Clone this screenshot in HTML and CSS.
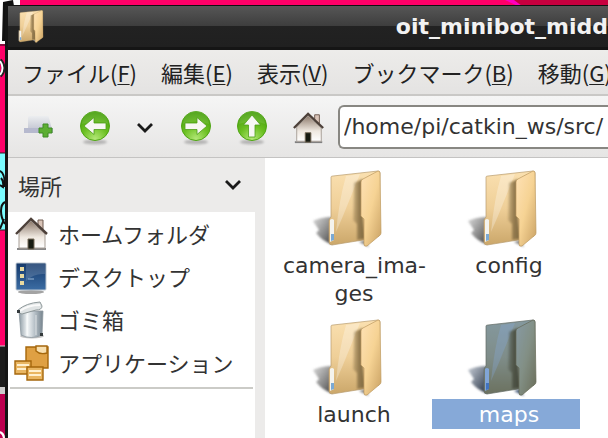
FILE: index.html
```html
<!DOCTYPE html>
<html lang="ja">
<head>
<meta charset="utf-8">
<title>oit_minibot_midd</title>
<link rel="stylesheet" href="styles.css">
</head>
<body>
<svg width="0" height="0" class="defs" aria-hidden="true">
<defs>
<linearGradient id="fb" x1="0" y1="0" x2="0" y2="1"><stop offset="0" stop-color="#fae0b0"/><stop offset=".5" stop-color="#efcf98"/><stop offset="1" stop-color="#cba76a"/></linearGradient>
<linearGradient id="ff" x1="0" y1="0" x2="1" y2="1"><stop offset="0" stop-color="#ffe2b6"/><stop offset=".5" stop-color="#f6d394"/><stop offset="1" stop-color="#c9a163"/></linearGradient>
<linearGradient id="fs" x1="0" y1="0" x2="1" y2="0"><stop offset="0" stop-color="#8c7449" stop-opacity=".3"/><stop offset=".5" stop-color="#8c7449" stop-opacity=".9"/><stop offset="1" stop-color="#7d6740"/></linearGradient>
<linearGradient id="sh" x1="0" y1="0" x2="1" y2="1"><stop offset="0" stop-color="#777" stop-opacity=".3"/><stop offset="1" stop-color="#444"/></linearGradient>
<radialGradient id="gr" cx=".5" cy=".95" r=".9"><stop offset="0" stop-color="#b4e878"/><stop offset=".5" stop-color="#6cc022"/><stop offset="1" stop-color="#459f0a"/></radialGradient>
<linearGradient id="roof" x1="0" y1="0" x2="0" y2="1"><stop offset="0" stop-color="#8b786a"/><stop offset=".6" stop-color="#efe8e0"/><stop offset="1" stop-color="#fff"/></linearGradient>
<linearGradient id="can" x1="0" y1="0" x2="1" y2="0"><stop offset="0" stop-color="#8c9aa3"/><stop offset=".35" stop-color="#f3f6f7"/><stop offset=".65" stop-color="#b7c1c8"/><stop offset="1" stop-color="#75838d"/></linearGradient>
<linearGradient id="desk" x1="0" y1="0" x2="0" y2="1"><stop offset="0" stop-color="#14386a"/><stop offset="1" stop-color="#3c6da4"/></linearGradient>
<linearGradient id="tab" x1="0" y1="0" x2="0" y2="1"><stop offset="0" stop-color="#eceef0"/><stop offset="1" stop-color="#b9bccb"/></linearGradient>
<filter id="blur" x="-20%" y="-20%" width="140%" height="140%"><feGaussianBlur stdDeviation="1"/></filter>
<filter id="tint" color-interpolation-filters="sRGB"><feColorMatrix values=".53 0 0 0 0 0 .68 0 0 0 0 0 .9 0 0 0 0 0 1 0"/></filter>
<symbol id="folder" viewBox="0 0 72 80">
<path d="M2 51Q10 47 21 47V74Q12 72 5 63L8 60Z" fill="url(#sh)" filter="url(#blur)"/>
<path d="M48 72L58 77L54 70Z" fill="#888" filter="url(#blur)"/>
<path d="M20 7Q20 6 22 6L67 1Q69 1 69 3L68 66L52 70L21 75Q18 75 18 72V51Q18 49 20 47Z" fill="url(#fb)" stroke="#b89c70" stroke-width=".7"/>
<path d="M35 6L49 4L32 46L25 62Q28 30 35 6Z" fill="#fff" opacity=".28"/>
<path d="M43 13L52 9V49L54 69L46 70V54L42 50Z" fill="url(#fs)" filter="url(#blur)"/>
<path d="M52 9L67 1Q69 1 69 3L70 63Q70 65 68 66L56 76Q53 77 53 74V49L50 46V12Q50 10 52 9Z" fill="url(#ff)" stroke="#bd995f" stroke-width=".7"/>
<path d="M19 50Q21 48 23 50V70L19 72Z" fill="#f4f3ee"/>
<path d="M20 64H23V70L20 71Z" fill="#7aa9d4"/>
</symbol>
<symbol id="house" viewBox="0 0 36 36">
<path d="M3 33H32" stroke="#555" stroke-width="2" opacity=".7"/>
<path d="M24 4H29V13H24Z" fill="#d9c4b8" stroke="#6f5a50"/>
<path d="M5 17L17 5L31 18V32H5Z" fill="url(#roof)" stroke="#a79e96"/>
<path d="M2 18L17 3L33 18" fill="none" stroke="#4d4039" stroke-width="2.4"/>
<path d="M14 23H20V33H14Z" fill="#171b12" stroke="#776a58"/>
</symbol>
<symbol id="chev" viewBox="0 0 18 12"><path d="M2 2L9 9L16 2" fill="none" stroke="#1a1a1a" stroke-width="2.8"/></symbol>
<symbol id="ball" viewBox="0 0 34 36"><ellipse cx="17" cy="32" rx="12" ry="2.5" fill="#777" opacity=".45" filter="url(#blur)"/><circle cx="17" cy="16" r="14.5" fill="url(#gr)" stroke="#4fa514"/><path d="M4 14A13 13 0 0 1 30 14Q17 9 4 14Z" fill="#fff" opacity=".1"/></symbol>
<symbol id="arrow" viewBox="0 0 34 36"><path d="M6 16L16 7.500V13H28V19.500H16V24.500Z" fill="#f7f7f4" stroke="#4f9e1b" stroke-width=".8"/></symbol>
</defs>
</svg>
<div class="desktop">
<svg class="wall" viewBox="0 0 608 438" preserveAspectRatio="none" aria-hidden="true">
<rect width="608" height="438" fill="#ff0068"/>
<path d="M505 0H516L523 6H518Z" fill="#ff00c0"/><path d="M514 0H608V6H522Z" fill="#c8003f"/>
<path d="M0 0H20V44H0Z" fill="#fff"/><path d="M3 2L13 0L14 6H6L5 41H2Z" fill="#111"/>
<path d="M0 45H5" stroke="#111" stroke-width="1"/>
<path d="M0 60Q7 68 0 76" fill="none" stroke="#222" stroke-width="4"/><path d="M0 61Q5 68 0 75" fill="none" stroke="#fff" stroke-width="2"/>
<path d="M0 153H5V230H0Z" fill="#7bfcff"/><path d="M0 153H5M0 230H5" stroke="#222"/>
<path d="M0 171Q5 173 5 187M1 178Q4 181 3 187L0 185M5 202Q1 204 1 211T5 224M0 229L4 219" fill="none" stroke="#111" stroke-width="2"/>
<path d="M0 346H5V388H0Z" fill="#1c1c1c"/><path d="M0 346H5" stroke="#ccc"/><path d="M0 387H5V394H0Z" fill="#ccc"/><path d="M0 394H5V438H0Z" fill="#bd0050"/><path d="M0 432Q4 434 4 438" fill="none" stroke="#fff" stroke-width="2"/>
</svg>
<main class="window">
<header class="titlebar"><svg class="ticon" viewBox="16 0 56 80" preserveAspectRatio="none"><use href="#folder" width="72" height="80"/></svg><h1>oit_minibot_midd</h1></header>
<nav class="menubar"><button>ファイル(<u>F</u>)</button><button>編集(<u>E</u>)</button><button>表示(<u>V</u>)</button><button>ブックマーク(<u>B</u>)</button><button>移動(<u>G</u>)</button></nav>
<div class="toolbar">
<button class="tool new" aria-label="新しいタブ"><svg width="34" height="36"><path d="M6 8Q6 6 8 6H25Q27 6 27 8L30 19V23H2V19H6Z" fill="url(#tab)"/><path d="M2 18H31V23H2Z" fill="#b6b9ce"/><path d="M21 14H26V18H30V23H26V27H21V23H17V18H21Z" fill="#5cae32" stroke="#3f8a26"/></svg></button>
<button class="tool back" aria-label="戻る"><svg width="34" height="36"><use href="#ball"/><use href="#arrow"/></svg></button>
<button class="tool hist" aria-label="履歴"><svg width="18" height="12"><use href="#chev"/></svg></button>
<button class="tool next" aria-label="進む"><svg width="34" height="36"><use href="#ball"/><g transform="translate(34 0) scale(-1 1)"><use href="#arrow"/></g></svg></button>
<button class="tool up" aria-label="上へ"><svg width="34" height="36"><use href="#ball"/><g transform="rotate(90 17 16)"><use href="#arrow"/></g></svg></button>
<button class="tool home" aria-label="ホーム"><svg width="34" height="36"><use href="#house"/></svg></button>
<input class="path" aria-label="パス" value="/home/pi/catkin_ws/src/">
</div>
<div class="content">
<aside class="side">
<button class="sidehead">場所<svg width="18" height="12"><use href="#chev"/></svg></button>
<ul class="places">
<li><a href="#"><svg width="36" height="36"><use href="#house"/></svg>ホームフォルダ</a></li>
<li><a href="#"><svg width="36" height="36"><ellipse cx="17" cy="33" rx="13" ry="2" fill="#666" opacity=".6"/><rect x="2" y="4" width="30" height="27" rx="1" fill="url(#desk)" stroke="#bcc6d0"/><path d="M12 5H31V15Q20 14 12 22Z" fill="#fff" opacity=".15"/><path d="M6 8H10V12H6ZM6 15H10V19H6ZM6 22H10V26H6Z" fill="#e8d9a0"/><path d="M14 20H20" stroke="#9db8d4"/></svg>デスクトップ</a></li>
<li><a href="#"><svg width="36" height="38"><ellipse cx="18" cy="35" rx="12" ry="2.500" fill="#888" opacity=".5"/><path d="M5 10H29L28 34Q17 39 7 34Z" fill="url(#can)" stroke="#8d989f" stroke-width=".8"/><path d="M13 14V34M22 14V34" stroke="#fff" opacity=".6"/><path d="M4 9Q12 2 26 1L28 5Q28 9 22 9L8 13Q4 13 4 9Z" fill="#dfe3e4" stroke="#8f999b"/><path d="M6 10Q14 4 26 4" stroke="#fafafa" stroke-width="2" fill="none"/><path d="M3 9H6V12H3ZM26 32H29V35H26Z" fill="#343a3c"/></svg>ゴミ箱</a></li>
<li><a href="#"><svg width="36" height="36"><g fill="#e9b662" stroke="#a5670c" stroke-width="1.400"><path d="M12 2H34V23H12Z" fill="#dfa043"/><path d="M22 1H33V8Q26 10 22 6Z" fill="#f8dfae"/><path d="M1 16H17V29H1Z"/><path d="M13 22H29V35H13Z"/></g><path d="M3 20H15M3 24H12M15 26H27M15 30H27" stroke="#fff0cf" stroke-width="2"/></svg>アプリケーション</a></li>
</ul>
</aside>
<section class="files">
<a class="file" href="#"><svg class="ficon"><use href="#folder"/></svg><span>camera_ima-<br>ges</span></a>
<a class="file" href="#"><svg class="ficon"><use href="#folder"/></svg><span>config</span></a>
<a class="file" href="#"><svg class="ficon"><use href="#folder"/></svg><span>launch</span></a>
<a class="file sel" href="#"><svg class="ficon"><use href="#folder"/></svg><span>maps</span></a>
</section>
</div>
</main>
</div>
</body>
</html>
```
FILE: styles.css
```css
* { box-sizing: border-box; }
body { margin: 0; overflow: hidden; color: #333; font: 22px/28px "DejaVu Sans", "Noto Sans CJK JP", sans-serif; }
.defs { position: absolute; }
svg { display: block; flex: none; }
button { padding: 0; border: 0; background: none; color: inherit; font: inherit; }
a { color: inherit; text-decoration: none; }
.desktop { position: relative; min-height: 100vh; padding: 5px 0 0 5px; }
.wall { position: absolute; inset: 0; width: 100%; height: 100%; }
.window { position: relative; display: flex; flex-direction: column; min-height: calc(100vh - 5px); border-left: 3px solid #151515; background: #ecebea; }
.titlebar { display: flex; align-items: center; justify-content: space-between; height: 45px; padding-left: 10px; border-top: 1px solid #111; border-bottom: 3px solid #151515; background: linear-gradient(#565656, #3e3e3e 48%, #222 49%, #202020); }
.ticon { width: 26px; height: 34px; }
h1 { flex: none; margin: 0; color: #f2f2f2; font-size: 22px; line-height: 28px; white-space: nowrap; }
.menubar { display: flex; gap: 24px; height: 46px; padding: 0 14px; border-bottom: 2px solid #c9c8c6; background: linear-gradient(#edecea, #e4e3e2); }
.menubar button { flex: none; color: #222; font: 22px/44px "Noto Sans CJK JP", sans-serif; white-space: nowrap; }
u { text-decoration-thickness: 1px; text-underline-offset: 2px; }
.toolbar { display: flex; align-items: center; height: 62px; padding-left: 14px; border-bottom: 1px solid #c4c3c2; background: linear-gradient(#f5f5f5, #e6e5e4); }
.tool { padding-top: 2px; }
.back { margin-left: 22px; }
.hist { margin-left: 24px; }
.next { margin-left: 25px; }
.up { margin-left: 22px; }
.home { margin: 0 12px 0 23px; }
.path { flex: 1; min-width: 0; height: 44px; padding: 0 4px; border: 2px solid #888782; border-right: 0; border-radius: 6px 0 0 6px; background: #fff; color: #333; font: inherit; }
.content { display: flex; flex: 1; }
.side { display: flex; flex-direction: column; width: 257px; padding-right: 10px; }
.sidehead { display: flex; align-items: center; justify-content: space-between; width: 100%; height: 54px; padding: 0 13px 0 10px; font: 22px/28px "Noto Sans CJK JP", sans-serif; }
.places { flex: 1; margin: 0; padding: 0 2px; background: #fff; list-style: none; }
.places a { display: flex; align-items: center; gap: 8px; height: 43px; padding-left: 4px; font: 22px/43px "Noto Sans CJK JP", sans-serif; white-space: nowrap; }
.places li:last-child { padding-bottom: 3px; border-bottom: 2px solid #cbcbc7; }
.files { flex: 1; display: grid; grid-template-columns: 148px 148px; grid-template-rows: 149px 1fr; column-gap: 7px; padding: 12px 0 0 12px; background: #fff; }
.file { display: flex; flex-direction: column; align-items: center; text-align: center; }
.ficon { width: 80px; height: 80px; padding-right: 8px; }
.file span { width: 100%; padding: 2px 0 0 6px; line-height: 28px; }
.sel span { background: #86a9d8; color: #fff; }
.sel .ficon { filter: url(#tint); }
```
